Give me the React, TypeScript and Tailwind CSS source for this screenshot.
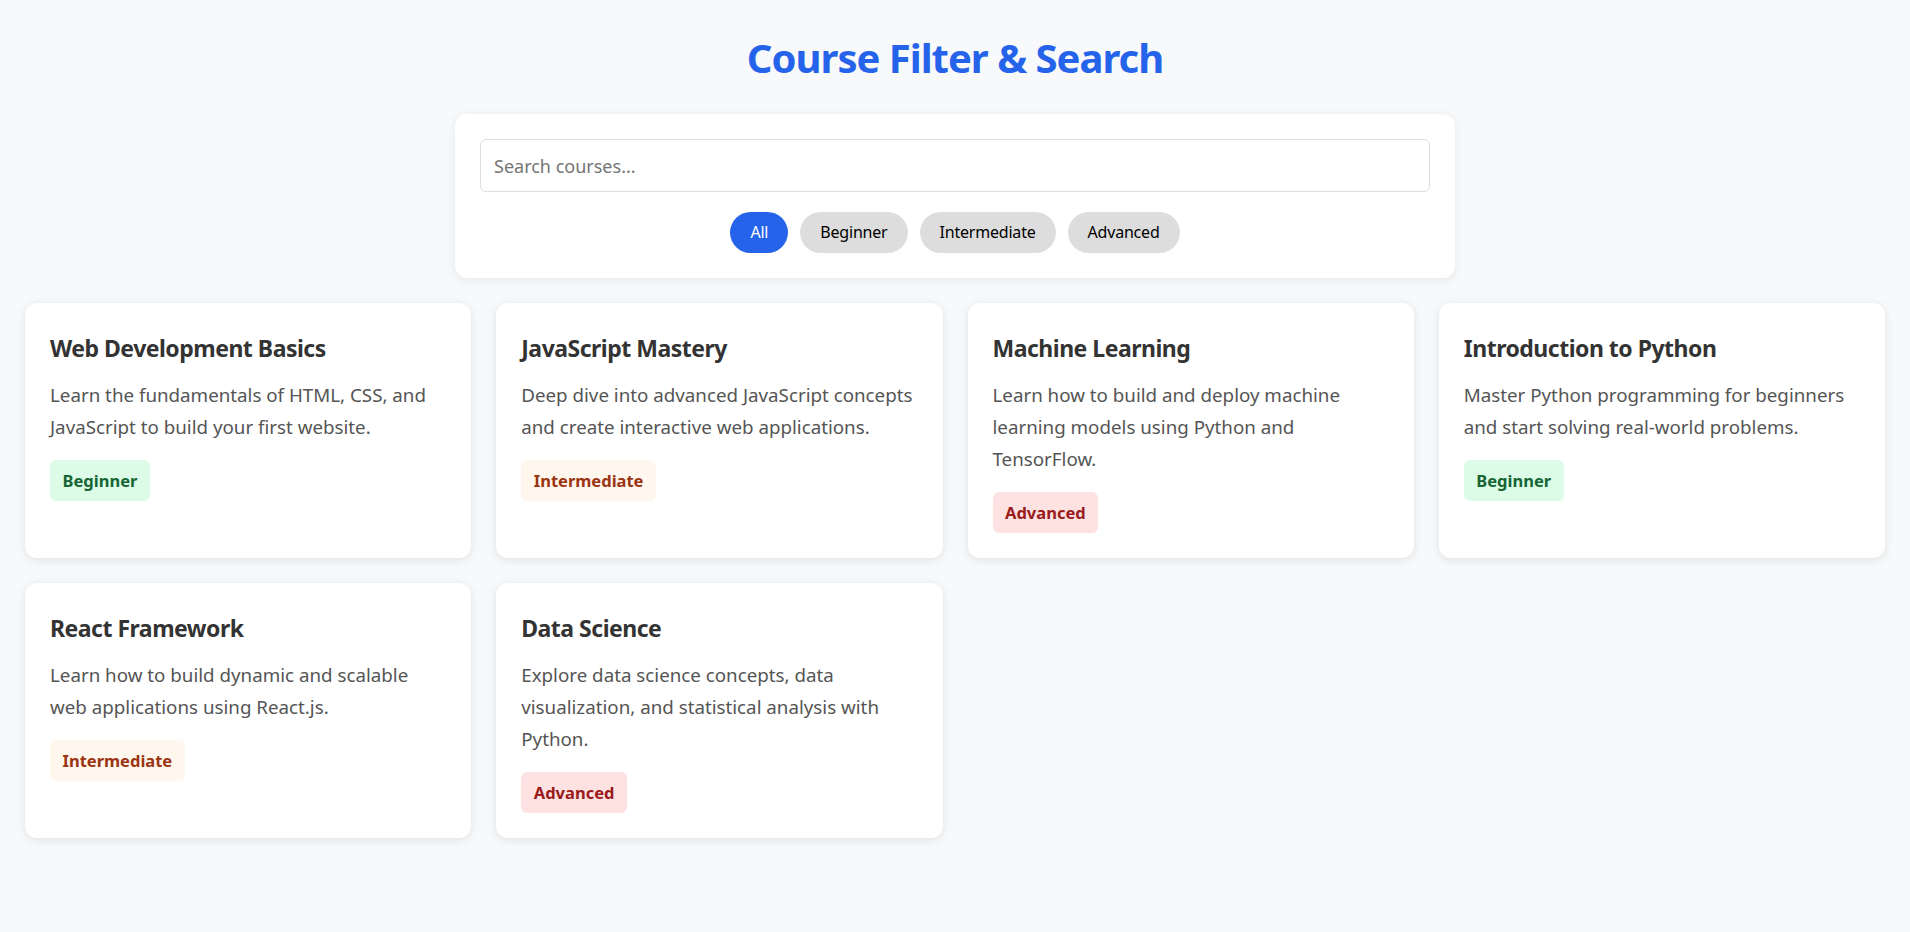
import { useState } from 'react'

type Level = 'Beginner' | 'Intermediate' | 'Advanced'

interface Course {
  title: string
  description: string
  level: Level
}

const courses: Course[] = [
  {
    title: 'Web Development Basics',
    description: 'Learn the fundamentals of HTML, CSS, and JavaScript to build your first website.',
    level: 'Beginner',
  },
  {
    title: 'JavaScript Mastery',
    description: 'Deep dive into advanced JavaScript concepts and create interactive web applications.',
    level: 'Intermediate',
  },
  {
    title: 'Machine Learning',
    description: 'Learn how to build and deploy machine learning models using Python and TensorFlow.',
    level: 'Advanced',
  },
  {
    title: 'Introduction to Python',
    description: 'Master Python programming for beginners and start solving real-world problems.',
    level: 'Beginner',
  },
  {
    title: 'React Framework',
    description: 'Learn how to build dynamic and scalable web applications using React.js.',
    level: 'Intermediate',
  },
  {
    title: 'Data Science',
    description: 'Explore data science concepts, data visualization, and statistical analysis with Python.',
    level: 'Advanced',
  },
]

const badgeClass: Record<Level, string> = {
  Beginner: 'bg-[#dcfce7] text-[#166534]',
  Intermediate: 'bg-[#fff7ed] text-[#9a3412]',
  Advanced: 'bg-[#fee2e2] text-[#991b1b]',
}

const filters = ['All', 'Beginner', 'Intermediate', 'Advanced']

export default function App() {
  const [query, setQuery] = useState('')
  const [filter, setFilter] = useState('All')

  const visible = courses.filter((c) => {
    const q = query.toLowerCase()
    const matches = c.title.toLowerCase().includes(q) || c.description.toLowerCase().includes(q)
    return matches && (filter === 'All' || c.level === filter)
  })

  return (
    <div className="min-h-screen bg-[#f8f9fa] p-[25px] font-['Noto_Sans',sans-serif] text-[#333]">
      <h1 className="mt-[9px] mb-[32px] text-center text-[40px] leading-[48px] font-bold tracking-[-1px] text-[#2563eb]">
        Course Filter &amp; Search
      </h1>

      {/* search + filter panel */}
      <div className="mx-auto max-w-[1000px] rounded-[12px] bg-white p-[25px] shadow-[0_2px_10px_rgba(0,0,0,0.08)]">
        <input
          type="text"
          value={query}
          onChange={(e) => setQuery(e.target.value)}
          placeholder="Search courses..."
          className="block h-[53px] w-full rounded-[6px] border border-[#ddd] px-[13px] text-[18px] text-[#333] outline-none placeholder:text-[#757575]"
        />
        <div className="mt-[20px] flex justify-center gap-[12px]">
          {filters.map((f) => (
            <button
              key={f}
              onClick={() => setFilter(f)}
              className={`rounded-full px-[20px] py-[10px] text-[16px] leading-[21px] tracking-[-0.2px] ${
                filter === f ? 'bg-[#2563eb] text-white' : 'bg-[#ddd] text-black'
              }`}
            >
              {f}
            </button>
          ))}
        </div>
      </div>

      {/* course cards */}
      <div className="mt-[25px] grid grid-cols-4 gap-[25px]">
        {visible.map((c) => (
          <div
            key={c.title}
            className="flex flex-col items-start rounded-[12px] bg-white p-[25px] shadow-[0_2px_10px_rgba(0,0,0,0.1)]"
          >
            <h3 className="mt-[1px] text-[23px] leading-[38px] font-bold tracking-[-0.5px] text-[#333]">{c.title}</h3>
            <p className="mt-[12px] text-[18.75px] leading-[32px] text-[#555]">{c.description}</p>
            <span
              className={`mt-[17px] rounded-[6px] px-[12.5px] py-[6.5px] text-[16.5px] leading-[28px] font-bold ${badgeClass[c.level]}`}
            >
              {c.level}
            </span>
          </div>
        ))}
      </div>
    </div>
  )
}
